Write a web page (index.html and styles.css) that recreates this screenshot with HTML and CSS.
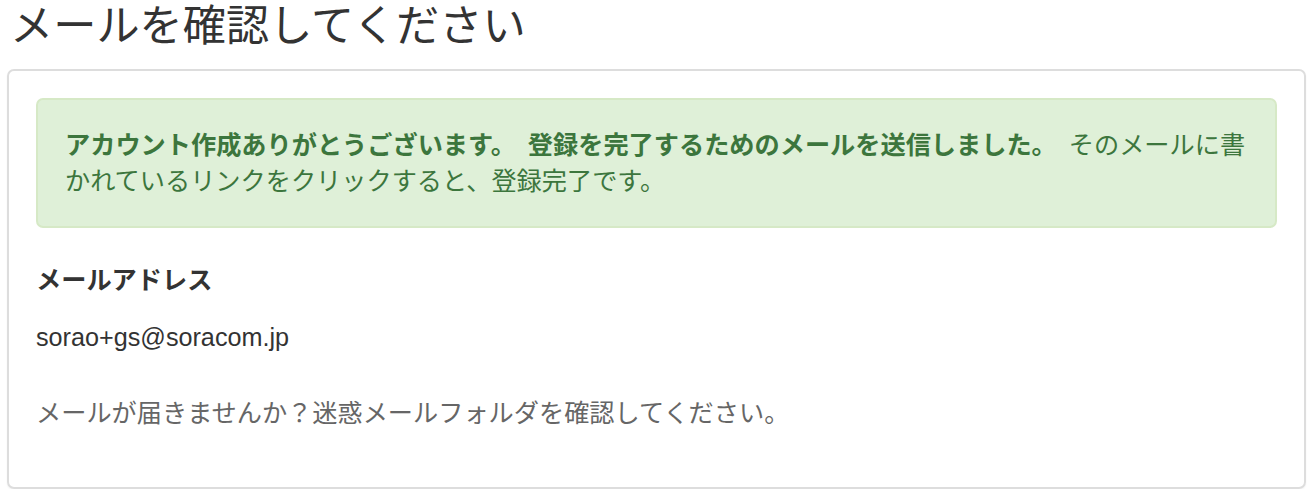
FILE: index.html
```html
<!DOCTYPE html>
<html lang="ja">
<head>
<meta charset="utf-8">
<title>メールを確認してください</title>
<link rel="stylesheet" href="styles.css">
</head>
<body>
<div class="page">
  <h1 class="title">メールを確認してください</h1>
  <div class="panel">
    <div class="alert">
      <strong>アカウント作成ありがとうございます。 登録を完了するためのメールを送信しました。</strong> そのメールに書かれているリンクをクリックすると、登録完了です。
    </div>
    <div class="field">
      <div class="field-label">メールアドレス</div>
      <p class="field-value">sorao+gs@soracom.jp</p>
    </div>
    <p class="note">メールが届きませんか？迷惑メールフォルダを確認してください。</p>
  </div>
</div>
</body>
</html>
```

FILE: styles.css
```css
html, body {
  margin: 0;
  padding: 0;
  background: #fff;
}
body {
  font-family: "Liberation Sans", "Noto Sans CJK JP", sans-serif;
  font-size: 25.2px;
  line-height: 36px;
  color: #333;
}
.page {
  padding: 0 6px 0 7px;
}
.title {
  margin: 3px 0 18px 3px;
  font-size: 43.2px;
  line-height: 47.5px;
  font-weight: 400;
  color: #333;
}
.panel {
  border: 2px solid #ddd;
  border-radius: 7px;
  padding: 27px 27px 56px;
  box-shadow: 0 1px 2px rgba(0,0,0,0.05);
}
.alert {
  background: #dff0d8;
  border: 2px solid #d6e9c6;
  border-radius: 7px;
  color: #3c763d;
  padding: 27px;
  margin-bottom: 36px;
  word-spacing: 5px;
}
.alert strong {
  font-weight: 700;
}
.field-label {
  font-weight: 700;
  margin-top: -2px;
}
.field-value {
  margin: 21px 0 0;
}
.note {
  margin: 40px 0 0;
  color: #666;
}
```
